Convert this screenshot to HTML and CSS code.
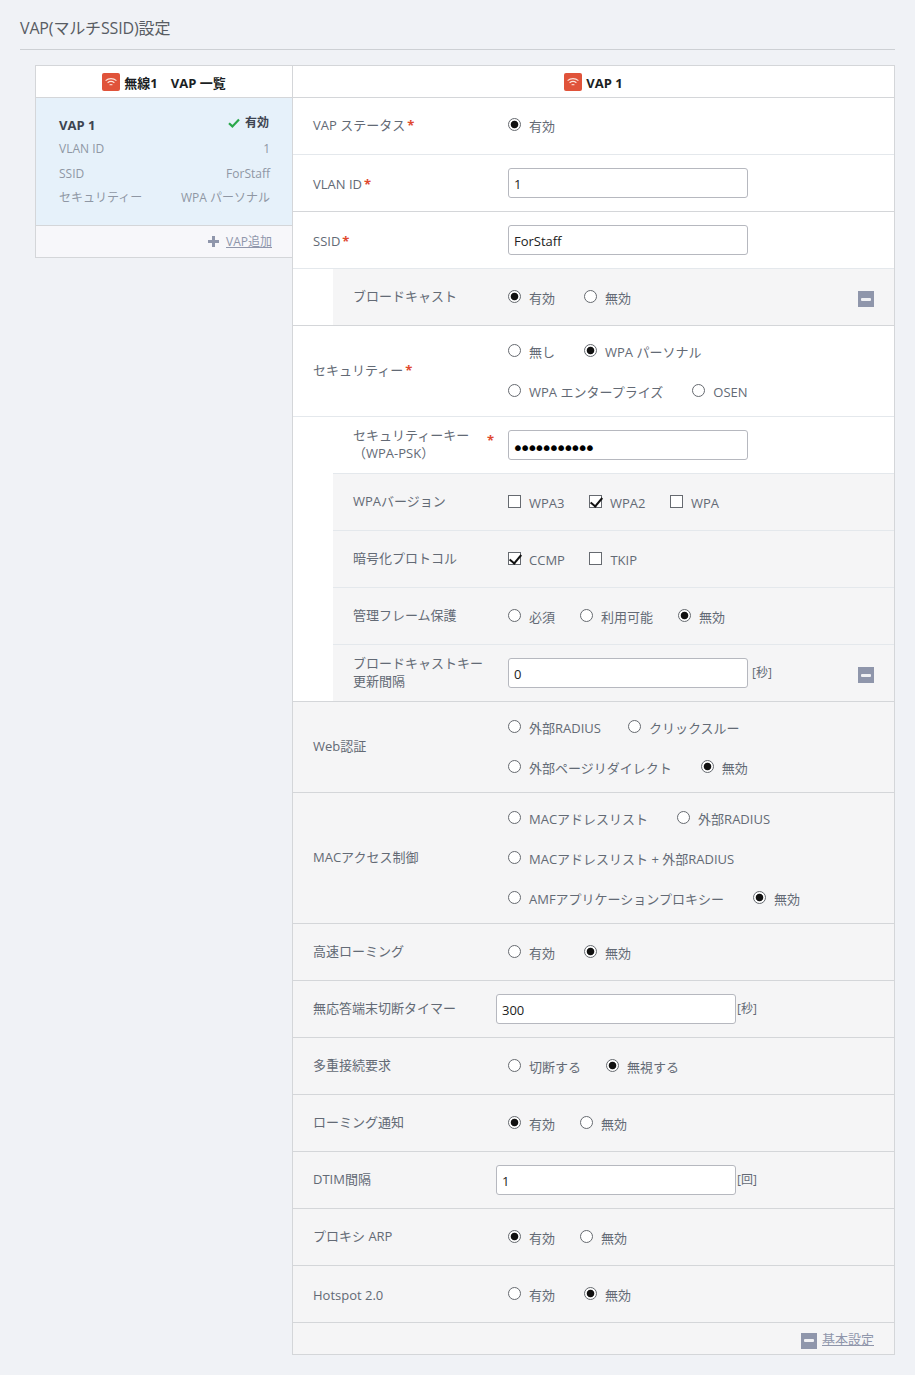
FILE: index.html
```html
<!DOCTYPE html>
<html lang="ja">
<head>
<meta charset="utf-8">
<title>VAP(マルチSSID)設定</title>
<link rel="stylesheet" href="styles.css">
</head>
<body>
<svg class="defs" width="0" height="0" aria-hidden="true">
  <symbol id="wifi" viewBox="0 0 18 18">
    <rect width="18" height="18" rx="2" fill="#e0533a"/>
    <path d="M3.6 7.6C6.6 4.9 11.4 4.9 14.4 7.6M5.6 9.8C7.6 8.2 10.4 8.2 12.4 9.8M7.6 12C8.4 11.4 9.6 11.4 10.4 12" fill="none" stroke="#fbe3dc" stroke-width="1.1"/>
  </symbol>
</svg>
<main class="page">
  <h1 class="title">VAP(マルチSSID)設定</h1>
  <div class="panel">
    <aside class="side">
      <h2 class="head"><svg class="wifi"><use href="#wifi"/></svg><span class="head-text">無線1　VAP 一覧</span></h2>
      <div class="item">
        <div class="item-row item-top">
          <strong class="item-name">VAP 1</strong>
          <span class="item-state"><svg class="check" viewBox="0 0 12 10"><path d="M1 5.2 4.4 8.4 11 1.6" fill="none" stroke="#2aa84a" stroke-width="2.2"/></svg>有効</span>
        </div>
        <div class="item-row"><span>VLAN ID</span><span>1</span></div>
        <div class="item-row"><span>SSID</span><span>ForStaff</span></div>
        <div class="item-row"><span>セキュリティー</span><span>WPA パーソナル</span></div>
      </div>
      <div class="side-foot">
        <svg class="plus" viewBox="0 0 11 11"><path d="M4 0h3v4h4v3H7v4H4V7H0V4h4z" fill="#8f96ab"/></svg>
        <a class="link" href="#">VAP追加</a>
      </div>
    </aside>
    <section class="main">
      <h2 class="head"><svg class="wifi"><use href="#wifi"/></svg><span class="head-text">VAP 1</span></h2>

      <div class="row soft up">
        <div class="lbl">VAP ステータス<b class="req">*</b></div>
        <div class="ctl"><label class="opt"><input type="radio" name="a" checked><span>有効</span></label></div>
      </div>
      <div class="row">
        <div class="lbl lbl-low">VLAN ID<b class="req">*</b></div>
        <div class="ctl"><input class="txt" type="text" value="1"></div>
      </div>
      <div class="row soft">
        <div class="lbl lbl-low">SSID<b class="req">*</b></div>
        <div class="ctl"><input class="txt" type="text" value="ForStaff"></div>
      </div>
      <div class="row sub grey">
        <div class="lbl">ブロードキャスト</div>
        <div class="ctl"><label class="opt"><input type="radio" name="b" checked><span>有効</span></label><label class="opt"><input type="radio" name="b"><span>無効</span></label></div>
        <span class="minus"></span>
      </div>
      <div class="rule"></div>

      <div class="row soft multi">
        <div class="lbl">セキュリティー<b class="req">*</b></div>
        <div class="ctl stack">
          <div class="line"><label class="opt"><input type="radio" name="c"><span>無し</span></label><label class="opt"><input type="radio" name="c" checked><span>WPA パーソナル</span></label></div>
          <div class="line"><label class="opt"><input type="radio" name="c"><span>WPA エンタープライズ</span></label><label class="opt"><input type="radio" name="c"><span>OSEN</span></label></div>
        </div>
      </div>
      <div class="row sub soft">
        <div class="lbl two">セキュリティーキー<br>（WPA-PSK）<b class="req req-far">*</b></div>
        <div class="ctl"><input class="txt pw" type="password" value="12345678901"></div>
      </div>
      <div class="row sub grey soft">
        <div class="lbl">WPAバージョン</div>
        <div class="ctl checks"><label class="opt"><input type="checkbox"><span>WPA3</span></label><label class="opt"><input type="checkbox" checked><span>WPA2</span></label><label class="opt"><input type="checkbox"><span>WPA</span></label></div>
      </div>
      <div class="row sub grey soft">
        <div class="lbl">暗号化プロトコル</div>
        <div class="ctl checks"><label class="opt"><input type="checkbox" checked><span>CCMP</span></label><label class="opt"><input type="checkbox"><span>TKIP</span></label></div>
      </div>
      <div class="row sub grey soft">
        <div class="lbl">管理フレーム保護</div>
        <div class="ctl tight"><label class="opt"><input type="radio" name="d"><span>必須</span></label><label class="opt"><input type="radio" name="d"><span>利用可能</span></label><label class="opt"><input type="radio" name="d" checked><span>無効</span></label></div>
      </div>
      <div class="row sub grey">
        <div class="lbl two">ブロードキャストキー<br>更新間隔</div>
        <div class="ctl"><input class="txt" type="text" value="0"><span class="unit">[秒]</span></div>
        <span class="minus"></span>
      </div>
      <div class="rule"></div>

      <div class="rest">
        <div class="row multi">
          <div class="lbl">Web認証</div>
          <div class="ctl stack">
            <div class="line line-near"><label class="opt"><input type="radio" name="e"><span>外部RADIUS</span></label><label class="opt"><input type="radio" name="e"><span>クリックスルー</span></label></div>
            <div class="line"><label class="opt"><input type="radio" name="e"><span>外部ページリダイレクト</span></label><label class="opt"><input type="radio" name="e" checked><span>無効</span></label></div>
          </div>
        </div>
        <div class="row multi">
          <div class="lbl">MACアクセス制御</div>
          <div class="ctl stack">
            <div class="line"><label class="opt"><input type="radio" name="f"><span>MACアドレスリスト</span></label><label class="opt"><input type="radio" name="f"><span>外部RADIUS</span></label></div>
            <div class="line"><label class="opt"><input type="radio" name="f"><span>MACアドレスリスト + 外部RADIUS</span></label></div>
            <div class="line"><label class="opt"><input type="radio" name="f"><span>AMFアプリケーションプロキシー</span></label><label class="opt"><input type="radio" name="f" checked><span>無効</span></label></div>
          </div>
        </div>
        <div class="row">
          <div class="lbl">高速ローミング</div>
          <div class="ctl"><label class="opt"><input type="radio" name="g"><span>有効</span></label><label class="opt"><input type="radio" name="g" checked><span>無効</span></label></div>
        </div>
        <div class="row">
          <div class="lbl lbl-wide">無応答端末切断タイマー</div>
          <div class="ctl"><input class="txt" type="text" value="300"><span class="unit unit-near">[秒]</span></div>
        </div>
        <div class="row">
          <div class="lbl">多重接続要求</div>
          <div class="ctl tight"><label class="opt"><input type="radio" name="h"><span>切断する</span></label><label class="opt"><input type="radio" name="h" checked><span>無視する</span></label></div>
        </div>
        <div class="row">
          <div class="lbl">ローミング通知</div>
          <div class="ctl tight"><label class="opt"><input type="radio" name="i" checked><span>有効</span></label><label class="opt"><input type="radio" name="i"><span>無効</span></label></div>
        </div>
        <div class="row">
          <div class="lbl lbl-wide">DTIM間隔</div>
          <div class="ctl"><input class="txt" type="text" value="1"><span class="unit unit-near">[回]</span></div>
        </div>
        <div class="row">
          <div class="lbl">プロキシ ARP</div>
          <div class="ctl tight"><label class="opt"><input type="radio" name="j" checked><span>有効</span></label><label class="opt"><input type="radio" name="j"><span>無効</span></label></div>
        </div>
        <div class="row">
          <div class="lbl lbl-low">Hotspot 2.0</div>
          <div class="ctl"><label class="opt"><input type="radio" name="k"><span>有効</span></label><label class="opt"><input type="radio" name="k" checked><span>無効</span></label></div>
        </div>
        <div class="main-foot"><span class="minus minus-foot"></span><a class="link" href="#">基本設定</a></div>
      </div>
    </section>
  </div>
</main>
</body>
</html>
```
FILE: styles.css
```css
* { box-sizing: border-box; }
html, body { margin: 0; padding: 0; }
body {
  background: #f0f2f6;
  color: #636a75;
  font: 13px/18px "Open Sans", "Noto Sans CJK JP", sans-serif;
}
.defs { position: absolute; }
.page { padding: 16px 20px 20px; width: 915px; }
.title {
  margin: 0 0 15px;
  height: 34px;
  border-bottom: 1px solid #cdd0d4;
  font-size: 16px;
  line-height: 24px;
  font-weight: 400;
  letter-spacing: -0.15px;
  color: #585c63;
}
.panel {
  display: flex;
  margin-left: 15px;
  align-items: flex-start;
}
.side {
  width: 257px;
  flex: none;
  border-left: 1px solid #d4d6d9;
  border-top: 1px solid #d4d6d9;
  border-bottom: 1px solid #d4d6d9;
}
.main {
  flex: 1;
  border: 1px solid #d4d6d9;
  background: #fff;
}
.head {
  margin: 0;
  height: 32px;
  display: flex;
  align-items: center;
  justify-content: center;
  gap: 4px;
  background: #fff;
  border-bottom: 1px solid #d4d6d9;
  font-size: 13px;
  line-height: 18px;
  font-weight: 700;
  color: #1c1f24;
}
.head-text { padding-top: 2px; }
.wifi { width: 18px; height: 18px; flex: none; margin-top: 1px; }
.item {
  background: #e6f1fa;
  height: 128px;
  padding: 16px 22px 0 23px;
  border-bottom: 1px solid #d4d6d9;
  font-size: 12px;
  color: #8f97a4;
}
.item-row {
  display: flex;
  justify-content: space-between;
  height: 24.5px;
  line-height: 18px;
}
.item-top { height: 26px; color: #3d4450; }
.item-name { font-size: 13px; font-weight: 700; padding-top: 2px; }
.item-state { display: flex; align-items: center; gap: 5px; height: 18px; margin-right: 1px; font-weight: 700; }
.check { width: 12px; height: 10px; }
.side-foot {
  height: 31px;
  background: #f7f7fa;
  display: flex;
  align-items: center;
  justify-content: flex-end;
  padding-right: 20px;
  gap: 7px;
  font-size: 12px;
}
.plus { width: 11px; height: 11px; }
.link { color: #8f96ab; text-decoration: underline; }
.row {
  display: flex;
  align-items: center;
  min-height: 57px;
  padding: 0 20px;
  background: #fff;
  border-bottom: 1px solid #d4d6d9;
}
.up { padding-bottom: 2px; }
.soft { border-bottom-color: #e4e8ec; }
.sub { margin-left: 40px; border-bottom: 0; min-height: 56px; }
.sub.soft { min-height: 57px; border-bottom: 1px solid #e4e8ec; }
.grey { background: #f5f5f6; }
.rule { height: 1px; background: #d4d6d9; }
.multi { padding-top: 5px; padding-bottom: 5px; }
.lbl { width: 195px; flex: none; position: relative; padding-bottom: 2px; }
.up .lbl { padding-bottom: 0; }
.sub .lbl { width: 155px; }
.lbl-wide { width: 183px; }
.lbl-low { padding-bottom: 0; padding-top: 2px; }
.two { line-height: 18px; }
.req { color: #e0492f; font-weight: 700; margin-left: 2px; }
.req-far { position: absolute; left: 134px; top: 5px; margin: 0; }
.ctl { display: flex; align-items: center; gap: 29px; }
.tight { gap: 25px; }
.checks { gap: 24.5px; }
.stack { display: block; }
.line { display: flex; align-items: center; gap: 29px; height: 40px; }
.line-near { gap: 27px; }
.opt { display: inline-flex; align-items: center; gap: 8px; }
.opt span { padding-top: 2px; }
.opt input { margin: 0 0 2px; flex: none; appearance: none; width: 13px; height: 13px; background: #fff; border: 1px solid #666a70; }
.opt input[type="radio"] { border-radius: 50%; }
.opt input[type="radio"]:checked {
  background: radial-gradient(circle, #111 0, #111 3.4px, #fff 4.2px);
}
.opt input[type="checkbox"] { position: relative; }
.opt input[type="checkbox"]:checked::after {
  content: "";
  position: absolute;
  left: 3px;
  top: -1px;
  width: 5px;
  height: 10px;
  border: solid #111;
  border-width: 0 2px 2px 0;
  transform: rotate(40deg);
}
.txt {
  width: 240px;
  height: 30px;
  padding: 1px 5px 0;
  margin: 0;
  background: #fff;
  border: 1px solid #b6b8bf;
  border-radius: 3px;
  color: #222;
  font: 13px/18px "Open Sans", "Noto Sans CJK JP", sans-serif;
}
.pw {
  padding: 5px 3px 0;
  font-family: "DejaVu Sans", sans-serif;
  font-size: 20px;
  letter-spacing: -4.6px;
  color: #000;
}
.unit { margin-left: -25px; font-size: 12px; }
.unit-near { margin-left: -28px; }
.minus {
  margin-left: auto;
  margin-top: 4px;
  width: 16px;
  height: 16px;
  flex: none;
  background: #8f96ab;
  display: flex;
  align-items: center;
  justify-content: center;
}
.minus::after { content: ""; width: 10px; height: 3px; background: #f0f1f4; border-radius: 1px; }
.rest .row { background: #f5f5f6; }
.main-foot {
  height: 31px;
  background: #f5f5f6;
  display: flex;
  align-items: center;
  justify-content: flex-end;
  gap: 5px;
  padding-right: 20px;
}
.minus-foot { margin-left: 0; }
```
